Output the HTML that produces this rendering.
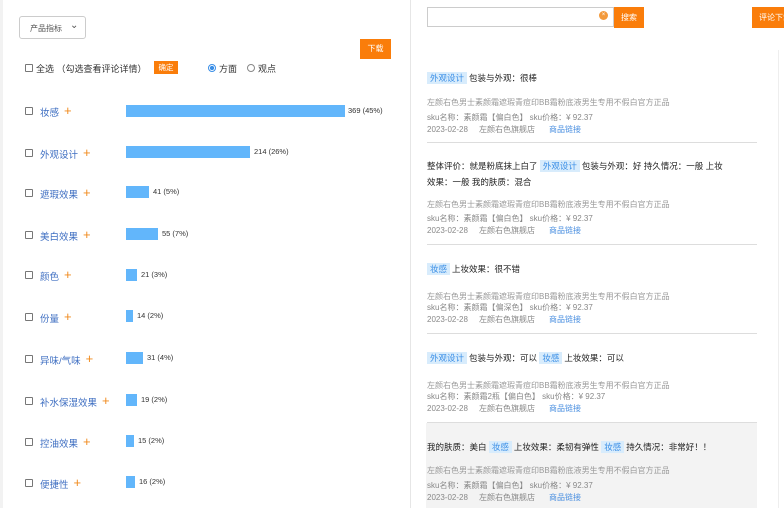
<!DOCTYPE html>
<html><head><meta charset="utf-8"><style>
*{margin:0;padding:0;box-sizing:border-box}
body{width:784px;height:508px;overflow:hidden;background:#fff;font-family:"Liberation Sans","Noto Sans CJK SC",sans-serif;position:relative;color:#333}
.a{position:absolute;white-space:nowrap}
.cb{position:absolute;width:8px;height:8px;border:1px solid #777;border-radius:1px;background:#fff}
.lbl{position:absolute;font-size:9.5px;color:#3f6fc2;white-space:nowrap}
.lbl b{color:#f08a1c;font-weight:normal;font-size:13px;margin-left:5px;position:relative;top:-1px}
.bar{position:absolute;left:126px;height:12px;background:#62b6fb}
.num{position:absolute;font-size:7.5px;color:#333;white-space:nowrap}
.btn{position:absolute;background:#fa7d0a;color:#fff;font-size:8px;text-align:center}
.tag{background:#d8ecfc;color:#3a8ee6;padding:1px 3px;margin:0 2px 0 0}
.t{position:absolute;left:427px;font-size:8.5px;color:#222;white-space:nowrap}
.g{position:absolute;left:427px;font-size:8px;color:#999;white-space:nowrap}
.g2{position:absolute;left:427px;font-size:8px;color:#888;white-space:nowrap}
.lk{color:#4a8fe0;margin-left:14px}
.hr{position:absolute;left:427px;width:330px;height:1px;background:#ddd}
</style></head><body>
<div class="a" style="left:0;top:0;width:3px;height:508px;background:#f2f2f2"></div>
<div class="a" style="left:410px;top:0;width:1px;height:508px;background:#e6e6e6"></div>
<div class="a" style="left:778px;top:50px;width:1px;height:458px;background:#eee"></div>

<div class="a" style="left:19px;top:16px;width:67px;height:23px;border:1px solid #ccc;border-radius:3px;font-size:8px;color:#555;padding:6px 0 0 10px">产品指标 <span style="position:absolute;left:50px;top:3px;font-size:10px;color:#555">&#8964;</span></div>
<div class="btn" style="left:360px;top:39px;width:31px;height:20px;line-height:20px">下载</div>

<div class="cb" style="left:25px;top:64px"></div>
<div class="a" style="left:36px;top:62px;font-size:9px;color:#333">全选 （勾选查看评论详情）</div>
<div class="btn" style="left:154px;top:61px;width:24px;height:13px;line-height:13px;font-size:7.5px">确定</div>
<div class="a" style="left:208px;top:64px;width:8px;height:8px;border-radius:50%;border:1px solid #3a8ee6;background:radial-gradient(#3a8ee6 45%,#fff 55%)"></div>
<div class="a" style="left:219px;top:62px;font-size:9px">方面</div>
<div class="a" style="left:247px;top:64px;width:8px;height:8px;border-radius:50%;border:1px solid #888"></div>
<div class="a" style="left:258px;top:62px;font-size:9px">观点</div>

<div class="cb" style="left:25px;top:107px"></div><div class="lbl" style="left:40px;top:104px">妆感<b>+</b></div><div class="bar" style="top:105px;width:219px"></div><div class="num" style="left:348px;top:106px">369 (45%)</div>
<div class="cb" style="left:25px;top:149px"></div><div class="lbl" style="left:40px;top:146px">外观设计<b>+</b></div><div class="bar" style="top:146px;width:124px"></div><div class="num" style="left:254px;top:147px">214 (26%)</div>
<div class="cb" style="left:25px;top:189px"></div><div class="lbl" style="left:40px;top:186px">遮瑕效果<b>+</b></div><div class="bar" style="top:186px;width:23px"></div><div class="num" style="left:153px;top:187px">41 (5%)</div>
<div class="cb" style="left:25px;top:231px"></div><div class="lbl" style="left:40px;top:228px">美白效果<b>+</b></div><div class="bar" style="top:228px;width:32px"></div><div class="num" style="left:162px;top:229px">55 (7%)</div>
<div class="cb" style="left:25px;top:271px"></div><div class="lbl" style="left:40px;top:268px">颜色<b>+</b></div><div class="bar" style="top:269px;width:11px"></div><div class="num" style="left:141px;top:270px">21 (3%)</div>
<div class="cb" style="left:25px;top:313px"></div><div class="lbl" style="left:40px;top:310px">份量<b>+</b></div><div class="bar" style="top:310px;width:7px"></div><div class="num" style="left:137px;top:311px">14 (2%)</div>
<div class="cb" style="left:25px;top:355px"></div><div class="lbl" style="left:40px;top:352px">异味/气味<b>+</b></div><div class="bar" style="top:352px;width:17px"></div><div class="num" style="left:147px;top:353px">31 (4%)</div>
<div class="cb" style="left:25px;top:397px"></div><div class="lbl" style="left:40px;top:394px">补水保湿效果<b>+</b></div><div class="bar" style="top:394px;width:11px"></div><div class="num" style="left:141px;top:395px">19 (2%)</div>
<div class="cb" style="left:25px;top:438px"></div><div class="lbl" style="left:40px;top:435px">控油效果<b>+</b></div><div class="bar" style="top:435px;width:8px"></div><div class="num" style="left:138px;top:436px">15 (2%)</div>
<div class="cb" style="left:25px;top:479px"></div><div class="lbl" style="left:40px;top:476px">便捷性<b>+</b></div><div class="bar" style="top:476px;width:9px"></div><div class="num" style="left:139px;top:477px">16 (2%)</div>

<div class="a" style="left:427px;top:7px;width:187px;height:20px;border:1px solid #ccc"></div>
<div class="a" style="left:599px;top:11px;width:9px;height:9px;border-radius:50%;background:#f39a3c;color:#fff;font-size:6px;text-align:center;line-height:9px">×</div>
<div class="btn" style="left:614px;top:7px;width:30px;height:21px;line-height:21px">搜索</div>
<div class="btn" style="left:752px;top:7px;width:40px;height:21px;line-height:21px;text-align:left;padding-left:7px">评论下载</div>

<div class="t" style="top:72px"><span class="tag">外观设计</span>包装与外观：很棒</div>
<div class="g" style="top:97px">左颜右色男士素颜霜遮瑕青痘印BB霜粉底液男生专用不假白官方正品</div>
<div class="g2" style="top:112px">sku名称：素颜霜【偏白色】 sku价格：¥ 92.37</div>
<div class="g2" style="top:124px">2023-02-28 &nbsp;&nbsp;&nbsp;&nbsp;左颜右色旗舰店<span class="lk">商品链接</span></div>
<div class="hr" style="top:142px"></div>

<div class="t" style="top:160px">整体评价：就是粉底抹上白了 <span class="tag">外观设计</span>包装与外观：好 持久情况：一般 上妆</div>
<div class="t" style="top:176px">效果：一般 我的肤质：混合</div>
<div class="g" style="top:199px">左颜右色男士素颜霜遮瑕青痘印BB霜粉底液男生专用不假白官方正品</div>
<div class="g2" style="top:213px">sku名称：素颜霜【偏白色】 sku价格：¥ 92.37</div>
<div class="g2" style="top:225px">2023-02-28 &nbsp;&nbsp;&nbsp;&nbsp;左颜右色旗舰店<span class="lk">商品链接</span></div>
<div class="hr" style="top:244px"></div>

<div class="t" style="top:263px"><span class="tag">妆感</span>上妆效果：很不错</div>
<div class="g" style="top:291px">左颜右色男士素颜霜遮瑕青痘印BB霜粉底液男生专用不假白官方正品</div>
<div class="g2" style="top:302px">sku名称：素颜霜【偏深色】 sku价格：¥ 92.37</div>
<div class="g2" style="top:314px">2023-02-28 &nbsp;&nbsp;&nbsp;&nbsp;左颜右色旗舰店<span class="lk">商品链接</span></div>
<div class="hr" style="top:333px"></div>

<div class="t" style="top:352px"><span class="tag">外观设计</span>包装与外观：可以 <span class="tag">妆感</span>上妆效果：可以</div>
<div class="g" style="top:380px">左颜右色男士素颜霜遮瑕青痘印BB霜粉底液男生专用不假白官方正品</div>
<div class="g2" style="top:391px">sku名称：素颜霜2瓶【偏白色】 sku价格：¥ 92.37</div>
<div class="g2" style="top:403px">2023-02-28 &nbsp;&nbsp;&nbsp;&nbsp;左颜右色旗舰店<span class="lk">商品链接</span></div>
<div class="hr" style="top:422px"></div>

<div class="a" style="left:426px;top:423px;width:331px;height:85px;background:#f3f3f3"></div>
<div class="t" style="top:441px">我的肤质：美白 <span class="tag">妆感</span>上妆效果：柔韧有弹性 <span class="tag">妆感</span>持久情况：非常好！！</div>
<div class="g" style="top:465px">左颜右色男士素颜霜遮瑕青痘印BB霜粉底液男生专用不假白官方正品</div>
<div class="g2" style="top:480px">sku名称：素颜霜【偏白色】 sku价格：¥ 92.37</div>
<div class="g2" style="top:492px">2023-02-28 &nbsp;&nbsp;&nbsp;&nbsp;左颜右色旗舰店<span class="lk">商品链接</span></div>
</body></html>
